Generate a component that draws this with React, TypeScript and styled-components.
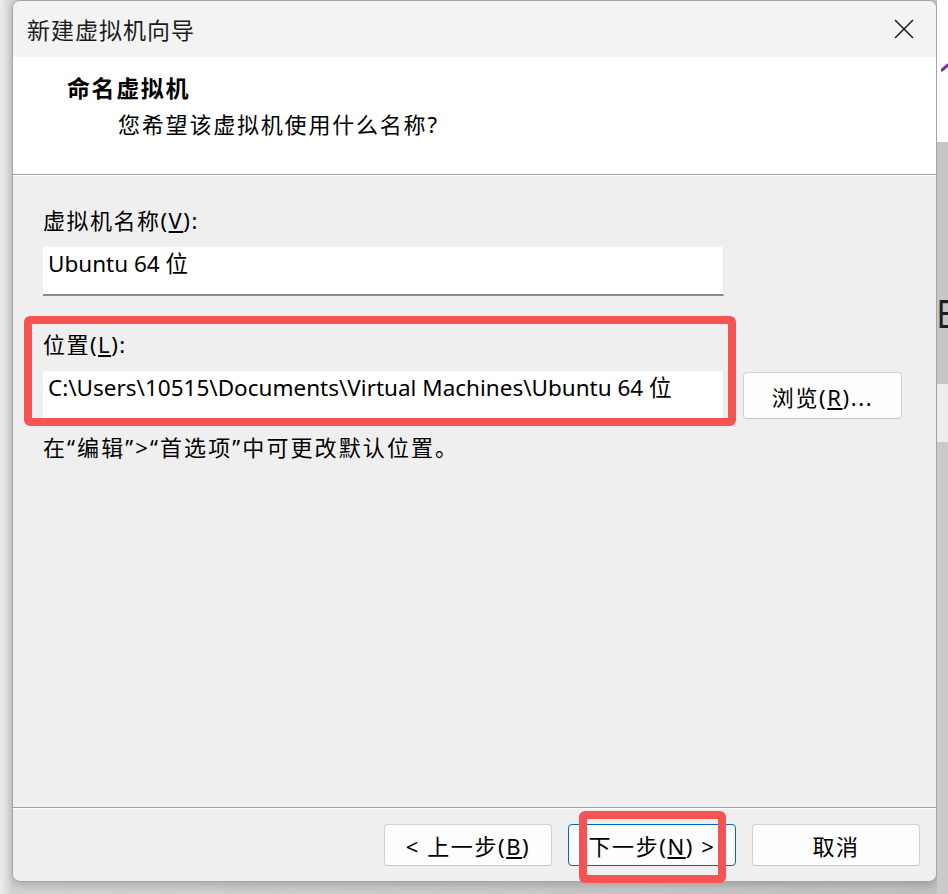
import React from "react";
import styled, { createGlobalStyle } from "styled-components";

const GlobalStyle = createGlobalStyle`
  html, body {
    margin: 0;
    padding: 0;
  }
  body {
    font-family: "Noto Sans", "Noto Sans CJK SC", sans-serif;
    color: #000;
  }
`;

const Desktop = styled.div`
  width: 948px;
  height: 894px;
  display: grid;
  grid-template-columns: 12px 925px 11px;
  grid-template-rows: 882px 12px;
  background: linear-gradient(to right, #d2d2d2, #c0c0c0);
  overflow: hidden;
`;

const LeftEdge = styled.div`
  grid-column: 1;
  grid-row: 1 / span 2;
  background: linear-gradient(to right, #ececec, #d3d3d3);
`;

const RightEdge = styled.div`
  grid-column: 3;
  grid-row: 1 / span 2;
  display: flex;
  flex-direction: column;
  overflow: hidden;
`;

const EdgeBlock = styled.div<{ $h?: number; $bg: string }>`
  flex: ${(p) => (p.$h ? `0 0 ${p.$h}px` : "1")};
  background: ${(p) => p.$bg};
  position: relative;
  overflow: hidden;
`;

const PurpleMark = styled.svg`
  display: block;
  margin: 62px 0 0 4px;
`;

// the window behind peeks out here, only a sliver of its text shows
const EdgeText = styled.div`
  margin-top: 152px;
  font-family: "Liberation Sans", sans-serif;
  font-size: 40px;
  line-height: 40px;
  color: #1e1e1e;
  transform: scaleX(0.8);
  transform-origin: left;
  white-space: nowrap;
`;

const Window = styled.div`
  grid-column: 2;
  grid-row: 1;
  position: relative;
  display: flex;
  flex-direction: column;
  border: 1px solid #a4a4a4;
  border-radius: 8px;
  background: #efefef;
  box-shadow: 0 3px 8px rgba(0, 0, 0, 0.18);
`;

const TitleBar = styled.div`
  height: 56px;
  display: flex;
  align-items: center;
  justify-content: space-between;
  padding: 0 22px 0 14px;
  background: #f3f3f3;
  border-radius: 7px 7px 0 0;
  font-size: 23px;
  letter-spacing: 1px;
  color: #1b1b1b;
`;

const Header = styled.div`
  height: 118px;
  box-sizing: border-box;
  padding: 16px 0 0 54px;
  background: #fff;
  border-bottom: 1px solid #a0a0a0;
  box-shadow: 0 1px 0 #fff;
`;

const HeaderTitle = styled.div`
  font-size: 23px;
  line-height: 30px;
  font-weight: bold;
  letter-spacing: 1.6px;
`;

const HeaderSub = styled.div`
  margin: 6px 0 0 51px;
  font-size: 22px;
  line-height: 30px;
  letter-spacing: 1.8px;
`;

const Body = styled.div`
  flex: 1;
  padding: 30px 0 0 30px;
`;

const Label = styled.div`
  font-size: 22px;
  line-height: 30px;
  letter-spacing: 1.5px;
`;

const Field = styled.div<{ $h: number }>`
  width: 681px;
  height: ${(p) => p.$h}px;
  box-sizing: border-box;
  margin-top: 12px;
  padding: 3px 5px 0;
  background: #fff;
  border-right: 1px solid #e6e6e6;
  border-bottom: 2px solid #8a8a8a;
  font-size: 22.5px;
  line-height: 28px;
  white-space: nowrap;
`;

const LocationBlock = styled.div`
  margin-top: 33px;
`;

const FieldRow = styled.div`
  display: flex;
  align-items: flex-start;
  gap: 19px;
  ${Field} {
    border-bottom: none;
  }
`;

const Button = styled.button<{ $w: number; $h: number; $primary?: boolean }>`
  width: ${(p) => p.$w}px;
  height: ${(p) => p.$h}px;
  box-sizing: border-box;
  margin: 0;
  padding: 0;
  background: #fdfdfd;
  border: 1px solid ${(p) => (p.$primary ? "#0067c0" : "#d2d2d2")};
  border-bottom-color: ${(p) => (p.$primary ? "#0067c0" : "#c4c4c4")};
  border-radius: 4px;
  font-family: inherit;
  font-size: 22px;
  letter-spacing: 1.6px;
  color: #000;
`;

const BrowseButton = styled(Button)`
  margin-top: 13px;
`;

const Note = styled.div`
  margin-top: 13px;
  font-size: 22px;
  line-height: 30px;
  letter-spacing: 2.1px;
`;

const Footer = styled.div`
  height: 73px;
  display: flex;
  align-items: center;
  justify-content: flex-end;
  gap: 16px;
  padding-right: 16px;
  border-top: 1px solid #a0a0a0;
  box-shadow: inset 0 1px 0 #fff;
  border-radius: 0 0 7px 7px;
`;

const Highlight = styled.div<{ $x: number; $y: number; $w: number; $h: number }>`
  position: absolute;
  left: ${(p) => p.$x}px;
  top: ${(p) => p.$y}px;
  width: ${(p) => p.$w}px;
  height: ${(p) => p.$h}px;
  box-sizing: border-box;
  border: 8px solid #f65454;
  border-radius: 6px;
  pointer-events: none;
`;

const CloseIcon = () => (
  <svg width="20" height="20" viewBox="0 0 20 20">
    <path d="M1 1 L19 19 M19 1 L1 19" stroke="#1a1a1a" strokeWidth="1.5" fill="none" />
  </svg>
);

const App = () => {
  return (
    <>
      <GlobalStyle />
      <Desktop>
        <LeftEdge />
        <Window>
          <TitleBar>
            <span>新建虚拟机向导</span>
            <CloseIcon />
          </TitleBar>
          <Header>
            <HeaderTitle>命名虚拟机</HeaderTitle>
            <HeaderSub>您希望该虚拟机使用什么名称?</HeaderSub>
          </Header>
          <Body>
            <Label>
              虚拟机名称(<u>V</u>):
            </Label>
            <Field $h={49}>Ubuntu 64 位</Field>
            <LocationBlock>
              <Label>
                位置(<u>L</u>):
              </Label>
              <FieldRow>
                <Field $h={48}>C:\Users\10515\Documents\Virtual Machines\Ubuntu 64 位</Field>
                <BrowseButton $w={159} $h={47}>
                  浏览(<u>R</u>)...
                </BrowseButton>
              </FieldRow>
            </LocationBlock>
            <Note>在“编辑”&gt;“首选项”中可更改默认位置。</Note>
          </Body>
          <Footer>
            <Button $w={168} $h={42}>
              &lt; 上一步(<u>B</u>)
            </Button>
            <Button $w={168} $h={42} $primary>
              下一步(<u>N</u>) &gt;
            </Button>
            <Button $w={168} $h={42}>
              取消
            </Button>
          </Footer>
          <Highlight $x={11} $y={315} $w={712} $h={110} />
          <Highlight $x={566} $y={810} $w={147} $h={72} />
        </Window>
        <RightEdge>
          <EdgeBlock $h={142} $bg="#ffffff">
            <PurpleMark width="8" height="10" viewBox="0 0 8 10">
              <path d="M1 8 L7 3" stroke="#7a2ea8" strokeWidth="3" strokeLinecap="round" />
            </PurpleMark>
          </EdgeBlock>
          <EdgeBlock $h={242} $bg="#c6c6c6">
            <EdgeText>E</EdgeText>
          </EdgeBlock>
          <EdgeBlock $h={58} $bg="#ededed" />
          <EdgeBlock $bg="#cbcbcb" />
        </RightEdge>
      </Desktop>
    </>
  );
};

export default App;
